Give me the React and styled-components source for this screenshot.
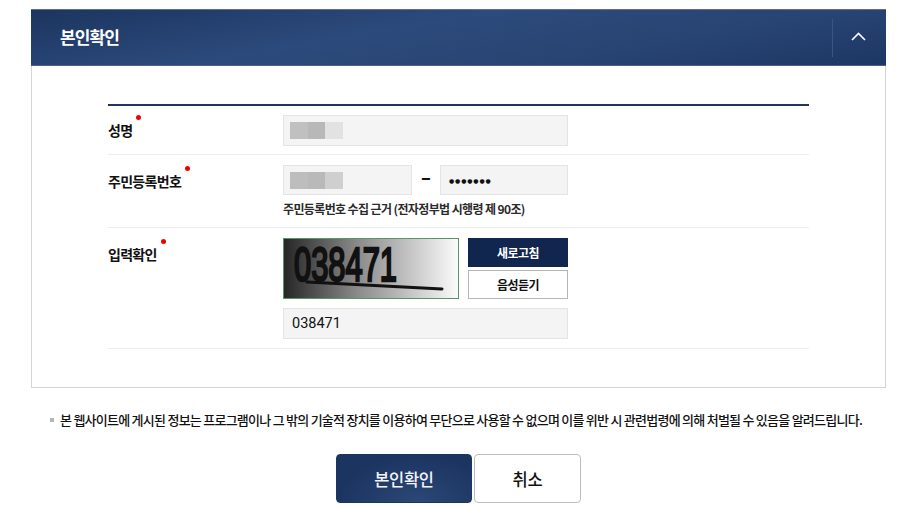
import React from "react";
import styled, { createGlobalStyle } from "styled-components";

const FONT = `"Noto Sans CJK KR", "Noto Sans", sans-serif`;

const Global = createGlobalStyle`
  html, body { margin: 0; padding: 0; background: #fff; overflow: hidden; }
  body { font-family: ${FONT}; color: #111; }
  * { box-sizing: border-box; }
`;

const Page = styled.div`
  width: 900px;
  height: 514px;
  padding: 9px 14px 0 31px;
`;

const Panel = styled.section`
  border: 1px solid #d4d4d4;
  border-top: 0;
  height: 379px;
`;

const PanelHeader = styled.header`
  height: 57px;
  margin: 0 -1px;
  display: flex;
  align-items: center;
  justify-content: space-between;
  background: linear-gradient(170deg, #1c3560 0%, #2c4a7c 40%, #284472 70%, #1d3764 100%);
  border-top: 1px solid #5a6f96;
  border-bottom: 1px solid #4d6089;
  color: #fff;
`;

const PanelTitle = styled.h2`
  margin: 0 0 2px 29px;
  font-size: 17px;
  font-weight: 700;
  letter-spacing: -0.9px;
`;

const Toggle = styled.div`
  width: 54px;
  height: 38px;
  padding: 0 2px 2px 0;
  border-left: 1px solid #3a5484;
  display: flex;
  align-items: center;
  justify-content: center;
`;

const FormArea = styled.div`
  margin: 38px 76px 0;
  border-top: 2px solid #24345f;
`;

const Row = styled.div`
  display: flex;
  height: ${p => p.$h}px;
  border-bottom: 1px solid #ececec;
`;

const LabelCell = styled.div`
  width: 175px;
  padding-top: ${p => p.$top}px;
`;

const Label = styled.span`
  position: relative;
  display: inline-block;
  font-size: 14px;
  font-weight: 700;
  letter-spacing: -0.7px;
  line-height: 20px;

  &::after {
    content: "";
    position: absolute;
    right: -9px;
    top: -5px;
    width: 5px;
    height: 5px;
    border-radius: 50%;
    background: #f00000;
  }
`;

const FieldCell = styled.div`
  width: 285px;
  padding-top: ${p => p.$top}px;
`;

const InputBox = styled.div`
  width: ${p => p.$w || 285}px;
  height: ${p => p.$h || 31}px;
  border: 1px solid #e4e4e4;
  background: #f4f4f4;
  display: flex;
  align-items: center;
  padding-left: ${p => p.$pad || 6}px;
  font-family: "Roboto", "Noto Sans", sans-serif;
  font-size: 14.5px;
  color: #111;
`;

const Mask = styled.div`
  display: flex;
  height: 17px;
`;

const MaskBlock = styled.i`
  display: block;
  width: ${p => p.$w}px;
  height: 100%;
  background: ${p => p.$c};
`;

const IdLine = styled.div`
  display: flex;
  align-items: center;
`;

const Dash = styled.span`
  width: 28px;
  text-align: center;
  font-size: 18px;
  font-weight: 900;
  line-height: 22px;
  padding-bottom: 8px;
`;

const Dots = styled.span`
  font-family: "DejaVu Sans", sans-serif;
  font-size: 6px;
  letter-spacing: 0.85px;
  font-weight: 700;
  padding-left: 2px;
`;

const Hint = styled.p`
  margin: 4px 0 0;
  font-size: 12px;
  font-weight: 700;
  letter-spacing: -0.62px;
  line-height: 19px;
  color: #2a2a2a;
`;

const CaptchaLine = styled.div`
  display: flex;
  justify-content: space-between;
  margin-bottom: 9px;
`;

const CaptchaBox = styled.div`
  width: 176px;
  height: 61px;
  border: 1px solid #5f9268;
  background: linear-gradient(90deg, #262626 0%, #8a8a8a 42%, #c4c4c4 72%, #fbfbfb 100%);
`;

const CaptchaButtons = styled.div`
  width: 100px;
  display: flex;
  flex-direction: column;
  justify-content: space-between;
`;

const SmallButton = styled.button`
  height: 29px;
  padding: 0;
  font-family: ${FONT};
  font-size: 12px;
  font-weight: 700;
  letter-spacing: -0.6px;
  border: 1px solid ${p => (p.$dark ? "#11264f" : "#b5b5b5")};
  background: ${p => (p.$dark ? "#11264f" : "#fff")};
  color: ${p => (p.$dark ? "#fff" : "#111")};
`;

const Notice = styled.p`
  position: relative;
  margin: 22px 0 0 29px;
  font-size: 13px;
  font-weight: 500;
  letter-spacing: -0.75px;
  line-height: 20px;
  white-space: nowrap;
  color: #111;

  &::before {
    content: "";
    position: absolute;
    left: -10px;
    top: 8px;
    width: 4px;
    height: 4px;
    background: #b5b5b5;
  }
`;

const Actions = styled.div`
  display: flex;
  justify-content: center;
  gap: 2px;
  margin-top: 24px;
`;

const ActionButton = styled.button`
  width: ${p => p.$w}px;
  height: 49px;
  padding: 0;
  border-radius: 4px;
  font-family: ${FONT};
  font-size: 16.5px;
  font-weight: 500;
  letter-spacing: -0.3px;
  border: 1px solid ${p => (p.$primary ? "#1d3561" : "#bdbdbd")};
  background: ${p => (p.$primary ? "radial-gradient(ellipse at 60% 100%, #2b4878 0%, #1c3460 70%)" : "#fff")};
  color: ${p => (p.$primary ? "#f2f4f8" : "#111")};
`;

const Chevron = () => (
  <svg width="15" height="9" viewBox="0 0 15 9" fill="none">
    <path d="M1 8 L7.5 1.5 L14 8" stroke="#fff" strokeWidth="1.6" />
  </svg>
);

const BlurMask = ({ colors }) => (
  <Mask>
    {colors.map((c, i) => <MaskBlock key={i} $c={c} $w={i === 1 ? 17 : 18} />)}
  </Mask>
);

const CaptchaArt = () => (
  <svg width="174" height="59" viewBox="0 0 174 59">
    <text
      x="10"
      y="42"
      fontFamily="Liberation Sans, sans-serif"
      fontSize="48"
      fontWeight="400"
      stroke="#111"
      strokeWidth="2.6"
      fill="#111"
      textLength="103"
      lengthAdjust="spacingAndGlyphs"
    >038471</text>
    <path d="M23 43 L158 50" stroke="#111" strokeWidth="3" strokeLinecap="round" />
  </svg>
);

export default function App() {
  return (
    <Page>
      <Global />
      <Panel>
        <PanelHeader>
          <PanelTitle>본인확인</PanelTitle>
          <Toggle><Chevron /></Toggle>
        </PanelHeader>
        <FormArea>
          <Row $h={49}>
            <LabelCell $top={11}><Label>성명</Label></LabelCell>
            <FieldCell $top={9}>
              <InputBox><BlurMask colors={["#c0c0c0", "#b8b8b8", "#e2e2e2"]} /></InputBox>
            </FieldCell>
          </Row>
          <Row $h={73}>
            <LabelCell $top={13}><Label>주민등록번호</Label></LabelCell>
            <FieldCell $top={10}>
              <IdLine>
                <InputBox $w={129} $h={30}><BlurMask colors={["#bdbdbd", "#b9b9b9", "#cfcfcf"]} /></InputBox>
                <Dash>–</Dash>
                <InputBox $w={128} $h={30}><Dots>●●●●●●●</Dots></InputBox>
              </IdLine>
              <Hint>주민등록번호 수집 근거 (전자정부법 시행령 제 90조)</Hint>
            </FieldCell>
          </Row>
          <Row $h={121}>
            <LabelCell $top={13}><Label>입력확인</Label></LabelCell>
            <FieldCell $top={10}>
              <CaptchaLine>
                <CaptchaBox><CaptchaArt /></CaptchaBox>
                <CaptchaButtons>
                  <SmallButton $dark>새로고침</SmallButton>
                  <SmallButton>음성듣기</SmallButton>
                </CaptchaButtons>
              </CaptchaLine>
              <InputBox $pad={8}>038471</InputBox>
            </FieldCell>
          </Row>
        </FormArea>
      </Panel>
      <Notice>본 웹사이트에 게시된 정보는 프로그램이나 그 밖의 기술적 장치를 이용하여 무단으로 사용할 수 없으며 이를 위반 시 관련법령에 의해 처벌될 수 있음을 알려드립니다.</Notice>
      <Actions>
        <ActionButton $primary $w={136}>본인확인</ActionButton>
        <ActionButton $w={107}>취소</ActionButton>
      </Actions>
    </Page>
  );
}
